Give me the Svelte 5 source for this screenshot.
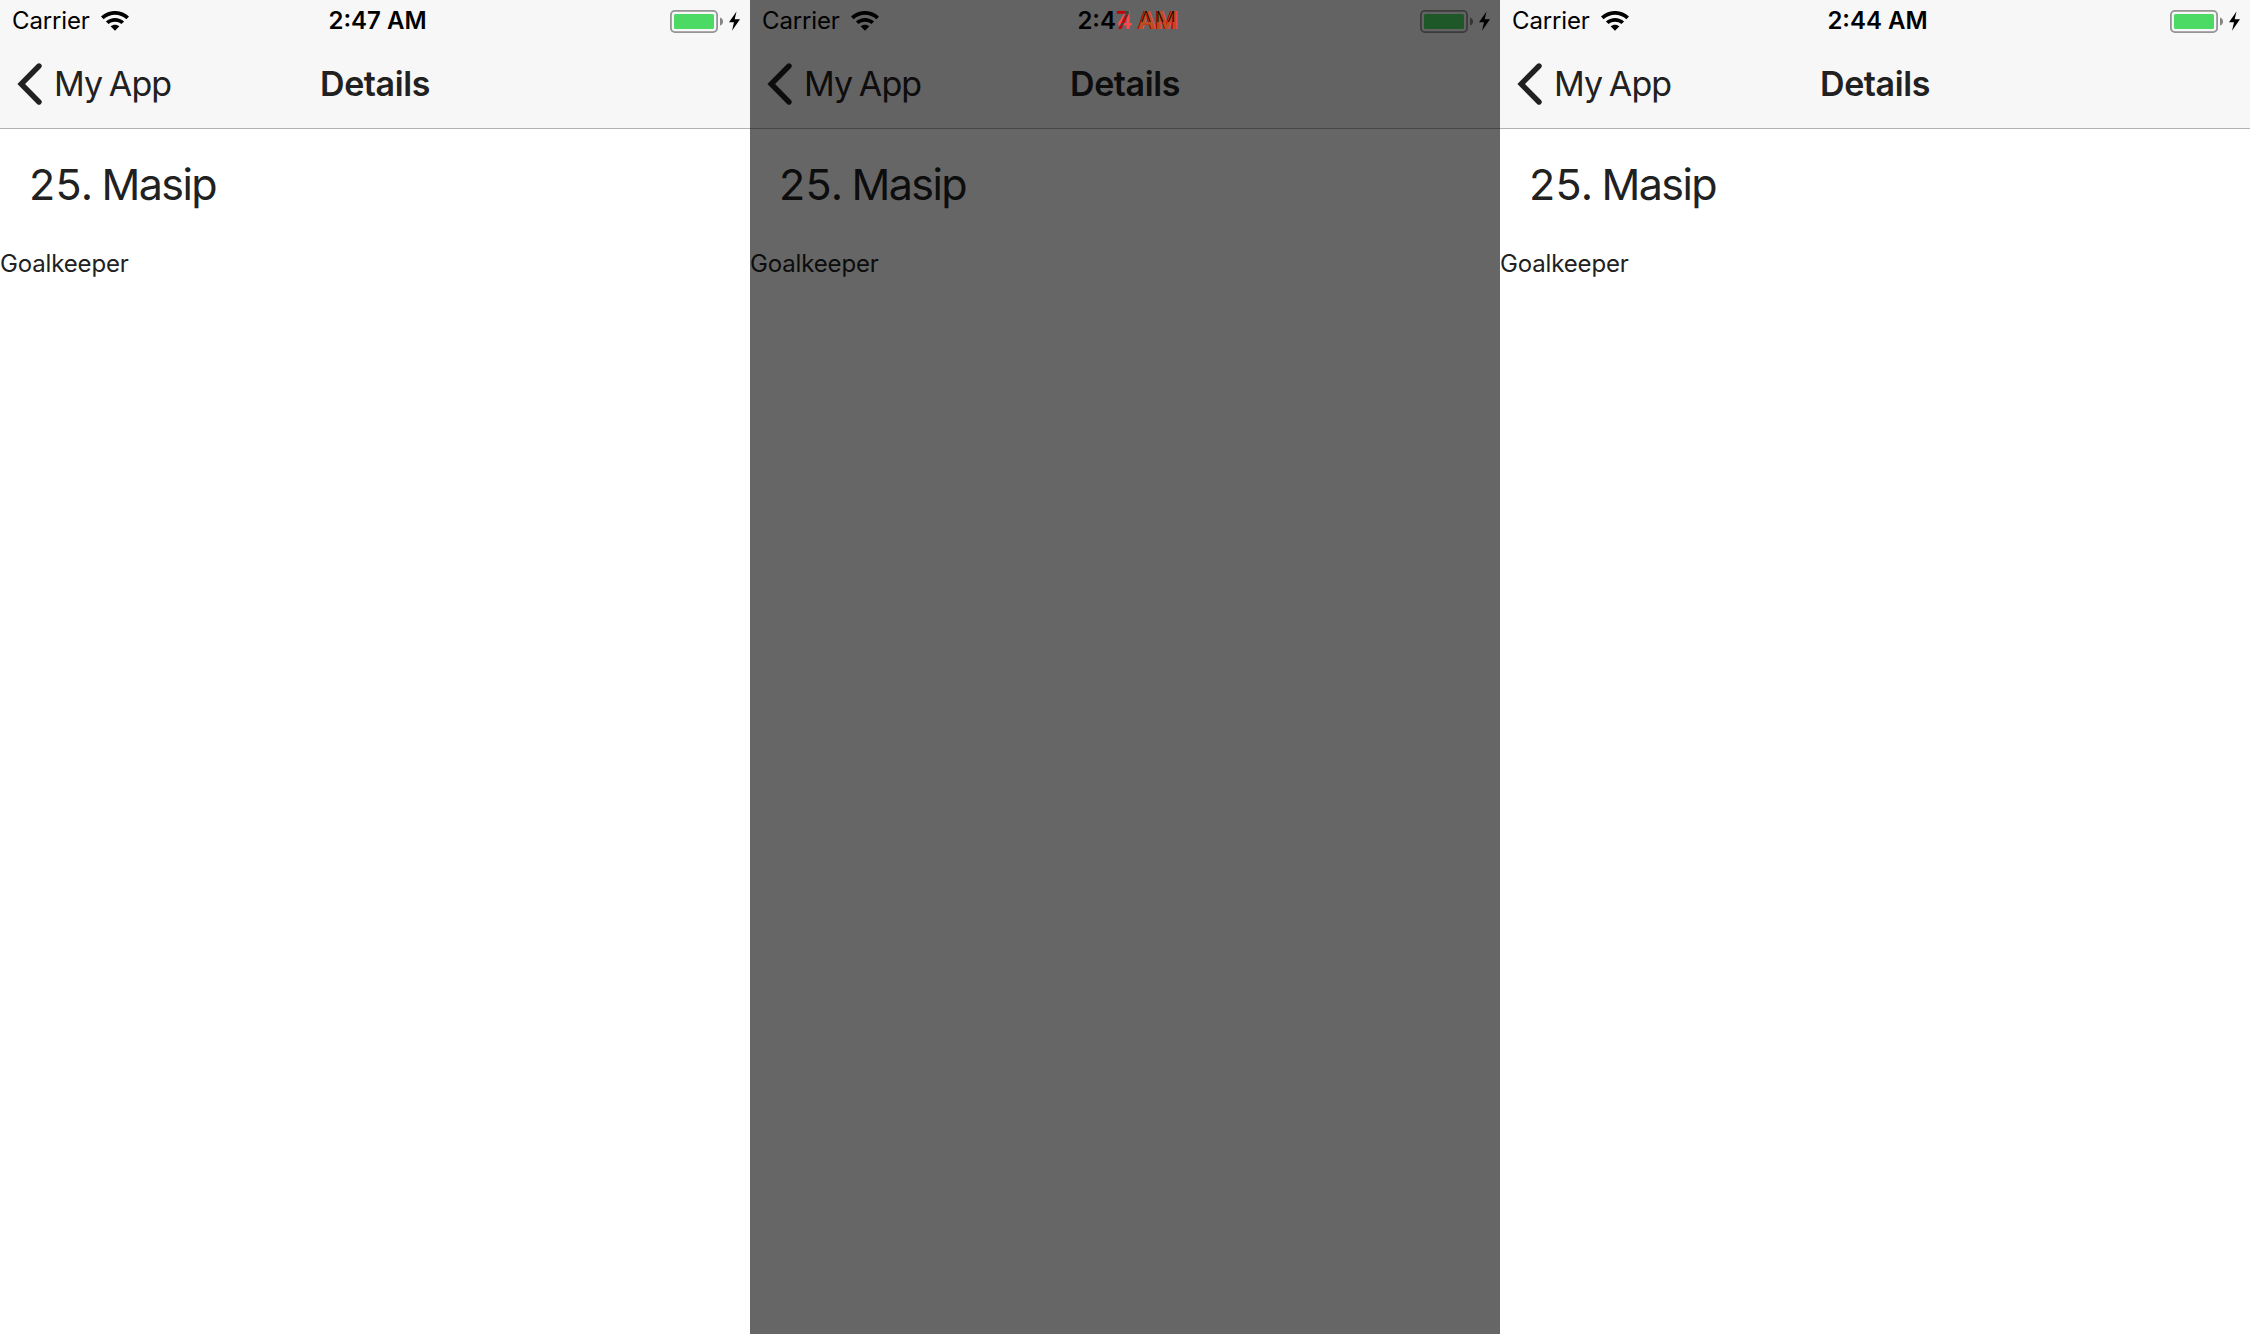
<script>
  const screens = [
    { time: '2:47 AM', kind: 'plain' },
    { time: '2:47 AM', kind: 'diff' },
    { time: '2:44 AM', kind: 'plain' }
  ];
</script>

<main>
  {#each screens as screen}
    <section class="screen" class:dim={screen.kind === 'diff'}>
      <header>
        <div class="status">
          <div class="left">
            <span class="carrier">Carrier</span>
            <svg class="wifi" width="28" height="20" viewBox="0 0 28 20">
              <path d="M0 5.6C7.8-1.9 20.2-1.9 28 5.6L25.4 8.2C19 2.2 9 2.2 2.6 8.2Z" />
              <path d="M4.9 10.4C10 5.7 18 5.7 23.1 10.4L20.4 13.1C16.8 9.9 11.2 9.9 7.6 13.1Z" />
              <path d="M9.6 15.2C12.1 13.1 15.9 13.1 18.4 15.2L14 19.8Z" />
            </svg>
          </div>
          {#if screen.kind === 'diff'}
            <span class="time">2:4<span class="changed"><span class="digit"><span class="before">7</span><span class="after">4</span></span><span class="shifted">{' '}AM</span></span></span>
          {:else}
            <span class="time">{screen.time}</span>
          {/if}
          <div class="right">
            <svg width="70" height="23" viewBox="0 0 70 23">
              <rect x="0.9" y="0.9" width="46.2" height="21.2" rx="4" fill="none" stroke="#949494" stroke-width="1.8" />
              <rect x="4" y="4" width="40" height="15" rx="1.5" fill="#4cd964" />
              <path d="M50 7.5Q53 8.5 53 11.5T50 15.5Z" fill="#858585" />
              <path d="M66.5 1.5L59 12.2H64L62 20.8L70 9.2H64.7Z" />
            </svg>
          </div>
        </div>
        <nav>
          <div class="back">
            <svg width="26" height="44" viewBox="0 0 26 44">
              <path d="M22 4L4.2 22L22 40" fill="none" stroke="#212121" stroke-width="5.4" stroke-linecap="round" />
            </svg>
            <span class="label">My App</span>
          </div>
          <h1>Details</h1>
          <div></div>
        </nav>
      </header>
      <h2>25. <span>Masip</span></h2>
      <p>Goalkeeper</p>
    </section>
  {/each}
</main>

<style>
  main {
    display: grid;
    grid-template-columns: repeat(3, 750px);
    height: 1334px;
    overflow: hidden;
    font-family: Inter, 'Liberation Sans', sans-serif;
    color: #212121;
    background: #fff;
  }
  .screen { position: relative; background: #fff; }
  .dim::after {
    content: '';
    position: absolute;
    inset: 0;
    z-index: 1;
    background: rgba(0, 0, 0, 0.6);
  }
  header {
    height: 128px;
    background: #f7f7f7;
    border-bottom: 1px solid #b2b2b2;
  }
  .status {
    display: grid;
    grid-template-columns: 1fr auto 1fr;
    align-items: center;
    height: 40px;
    padding: 0 10px 0 12px;
    color: #000;
    font-size: 24px;
    line-height: 42px;
  }
  .left { display: flex; align-items: center; gap: 11px; }
  .carrier { letter-spacing: -0.15px; }
  .right { display: flex; justify-content: flex-end; align-items: center; }
  .time { padding-left: 3px; font-weight: 580; white-space: pre; }
  .changed { position: relative; z-index: 2; }
  .digit { display: inline-grid; isolation: isolate; }
  .digit > span { grid-area: 1 / 1; }
  .before { color: #c00; }
  .after { padding-left: 1px; margin-right: -1px; color: #ff4a4a; mix-blend-mode: difference; }
  .shifted {
    position: relative;
    color: #b8501e;
    text-shadow: -1px 0 #c00000, 1px 0 #ff4040;
  }
  .shifted::after {
    content: 'AM';
    position: absolute;
    right: 0;
    top: 0;
    line-height: normal;
    color: #100800;
    font-weight: 200;
    letter-spacing: 1.2px;
    text-shadow: none;
    clip-path: inset(0 0 45% 0);
  }
  nav {
    display: grid;
    grid-template-columns: 1fr auto 1fr;
    align-items: center;
    height: 88px;
    font-size: 34px;
    line-height: 88px;
  }
  .back { display: flex; align-items: center; padding-left: 17px; gap: 11px; }
  .label { letter-spacing: -0.9px; word-spacing: -2px; }
  h1 { margin: 0; font-size: 34px; font-weight: 600; letter-spacing: -0.4px; }
  h2 { margin: 25px 0 0 29px; font-size: 43px; line-height: 60px; font-weight: 400; letter-spacing: 0.3px; word-spacing: -4.5px; }
  h2 span { letter-spacing: -1.55px; }
  p { margin: 34px 0 0; font-size: 24px; line-height: 32px; letter-spacing: -0.15px; }
</style>
